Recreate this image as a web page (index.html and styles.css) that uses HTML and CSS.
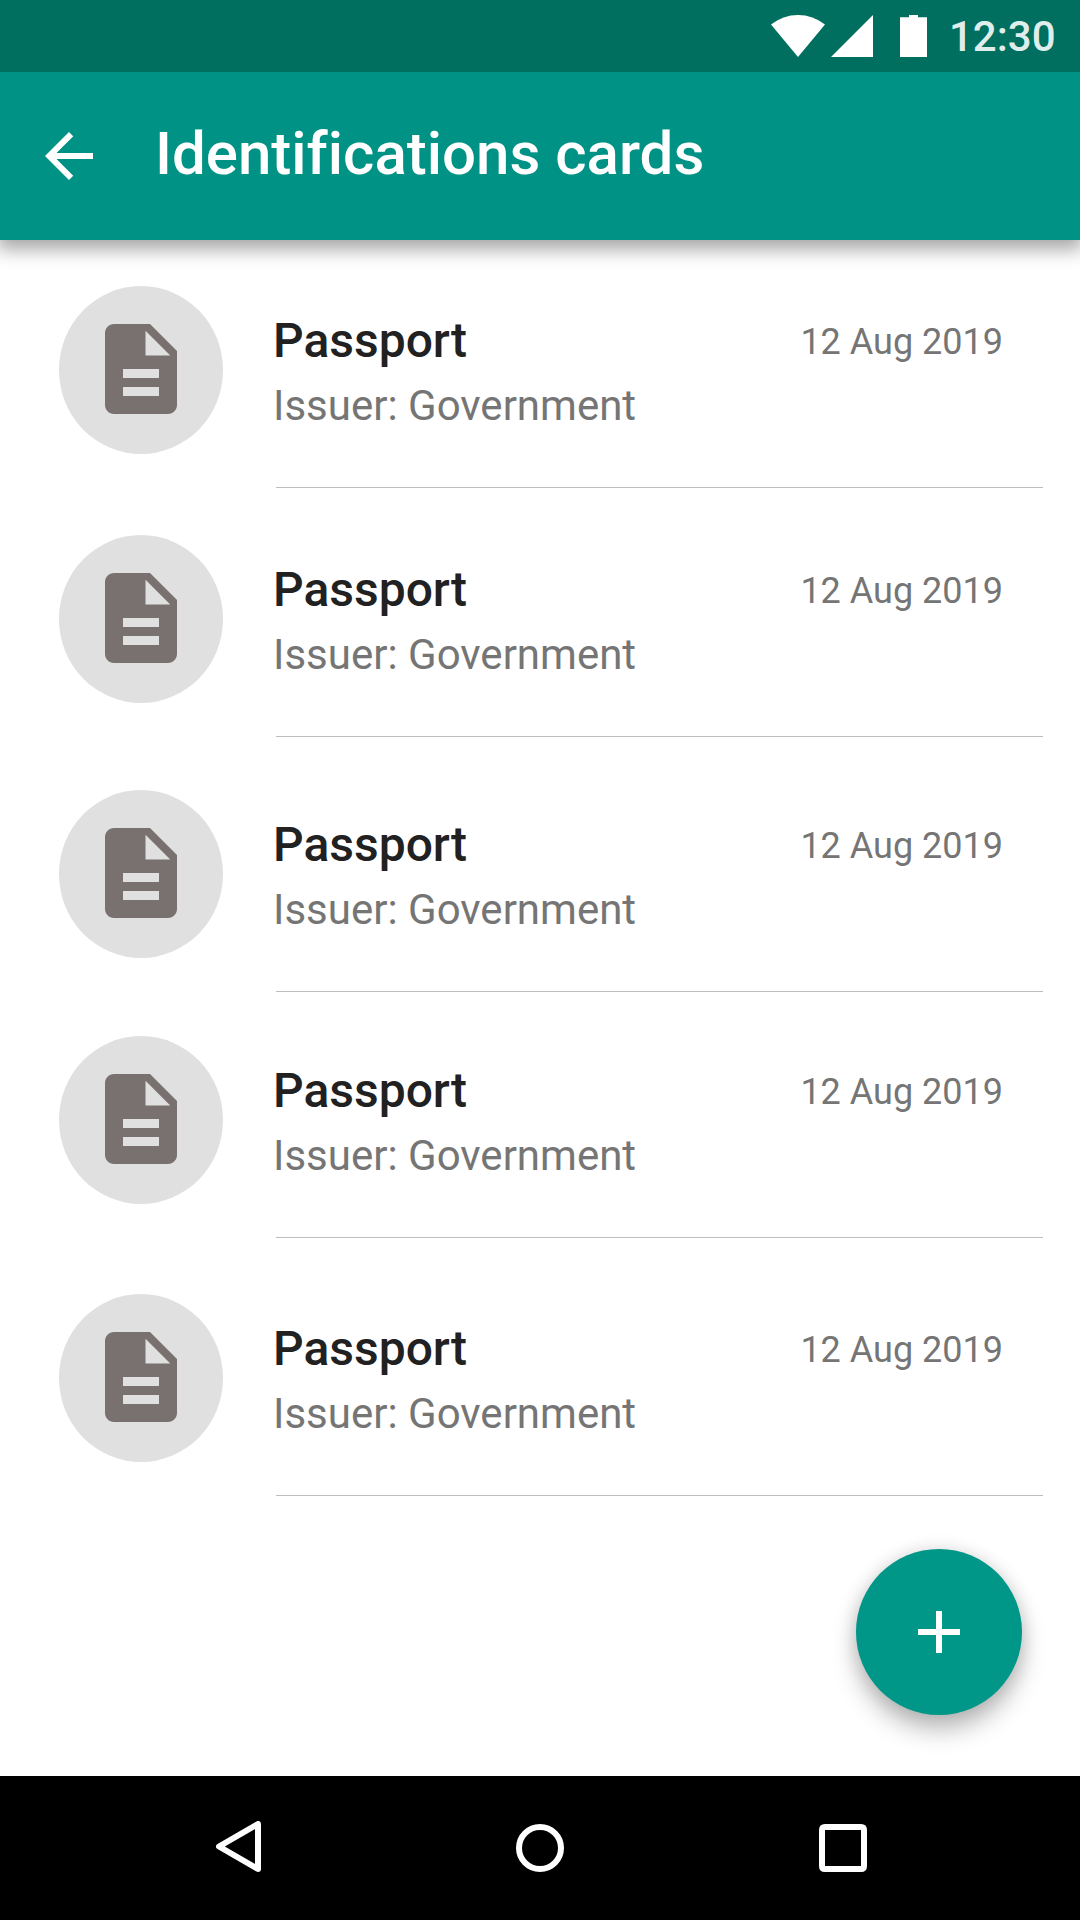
FILE: index.html
```html
<!DOCTYPE html>
<html lang="en">
<head>
<meta charset="utf-8">
<title>Identifications cards</title>
<link rel="stylesheet" href="styles.css">
</head>
<body>
<div class="screen">
  <div class="status-bar">
    <svg class="wifi" viewBox="0 0 54 42"><path d="M0 9.5Q12 0 27 0T54 9.5L27 42Z"/></svg>
    <svg class="signal" viewBox="0 0 42 42"><path d="M42 0V42H0Z"/></svg>
    <svg class="battery" viewBox="0 0 27 42"><path d="M9 0H18V2.2H27V42H0V2.2H9Z"/></svg>
    <span class="time">12:30</span>
  </div>
  <header class="app-bar">
    <svg class="back" viewBox="4 4 16 16"><path d="M20 11H7.83l5.59-5.59L12 4l-8 8 8 8 1.41-1.41L7.83 13H20v-2z"/></svg>
    <h1 class="title">Identifications cards</h1>
  </header>
  <main class="list">
    <article class="item">
      <div class="avatar"><svg class="doc" viewBox="4 2 16 20"><path d="M14 2H6c-1.100 0-2 .9-2 2v16c0 1.100.9 2 2 2h12c1.100 0 2-.9 2-2V8l-6-6zm2 16H8v-2h8v2zm0-4H8v-2h8v2zm-3-5V3.500L18.500 9H13z"/></svg></div>
      <div class="content"><div class="text"><h2 class="name">Passport</h2><p class="issuer">Issuer: Government</p></div><time class="date">12 Aug 2019</time></div>
    </article>
    <article class="item">
      <div class="avatar"><svg class="doc" viewBox="4 2 16 20"><path d="M14 2H6c-1.100 0-2 .9-2 2v16c0 1.100.9 2 2 2h12c1.100 0 2-.9 2-2V8l-6-6zm2 16H8v-2h8v2zm0-4H8v-2h8v2zm-3-5V3.500L18.500 9H13z"/></svg></div>
      <div class="content"><div class="text"><h2 class="name">Passport</h2><p class="issuer">Issuer: Government</p></div><time class="date">12 Aug 2019</time></div>
    </article>
    <article class="item item-third">
      <div class="avatar"><svg class="doc" viewBox="4 2 16 20"><path d="M14 2H6c-1.100 0-2 .9-2 2v16c0 1.100.9 2 2 2h12c1.100 0 2-.9 2-2V8l-6-6zm2 16H8v-2h8v2zm0-4H8v-2h8v2zm-3-5V3.500L18.500 9H13z"/></svg></div>
      <div class="content"><div class="text"><h2 class="name">Passport</h2><p class="issuer">Issuer: Government</p></div><time class="date">12 Aug 2019</time></div>
    </article>
    <article class="item item-fourth">
      <div class="avatar"><svg class="doc" viewBox="4 2 16 20"><path d="M14 2H6c-1.100 0-2 .9-2 2v16c0 1.100.9 2 2 2h12c1.100 0 2-.9 2-2V8l-6-6zm2 16H8v-2h8v2zm0-4H8v-2h8v2zm-3-5V3.500L18.500 9H13z"/></svg></div>
      <div class="content"><div class="text"><h2 class="name">Passport</h2><p class="issuer">Issuer: Government</p></div><time class="date">12 Aug 2019</time></div>
    </article>
    <article class="item item-fifth">
      <div class="avatar"><svg class="doc" viewBox="4 2 16 20"><path d="M14 2H6c-1.100 0-2 .9-2 2v16c0 1.100.9 2 2 2h12c1.100 0 2-.9 2-2V8l-6-6zm2 16H8v-2h8v2zm0-4H8v-2h8v2zm-3-5V3.500L18.500 9H13z"/></svg></div>
      <div class="content"><div class="text"><h2 class="name">Passport</h2><p class="issuer">Issuer: Government</p></div><time class="date">12 Aug 2019</time></div>
    </article>
  </main>
  <button class="fab" aria-label="Add"><svg class="plus" viewBox="0 0 42 42"><path d="M18 0H24V18H42V24H24V42H18V24H0V18H18Z"/></svg></button>
  <nav class="nav-bar">
    <svg class="nav-back" viewBox="0 0 45 51"><path d="M42 3V48L3 25.500Z"/></svg>
    <svg class="nav-home" viewBox="0 0 48 48"><circle cx="24" cy="24" r="21"/></svg>
    <svg class="nav-recent" viewBox="0 0 48 48"><path fill-rule="evenodd" d="M6 0H42Q48 0 48 6V42Q48 48 42 48H6Q0 48 0 42V6Q0 0 6 0ZM6 6V42H42V6Z"/></svg>
  </nav>
</div>
</body>
</html>
```
FILE: styles.css
```css
* { box-sizing: border-box; }
body, h1, h2, p { margin: 0; }
body { font-family: Roboto, sans-serif; background: #fff; }
svg { display: block; flex: none; }

.screen {
  position: relative;
  display: flex;
  flex-direction: column;
  width: 1080px;
  height: 1920px;
  overflow: hidden;
}

.status-bar {
  position: relative;
  z-index: 1;
  display: flex;
  height: 72px;
  padding: 15px 0 0 771px;
  background: #006f60;
  fill: #fff;
}
.wifi { width: 54px; height: 42px; margin-right: 6px; }
.signal { width: 42px; height: 42px; margin-right: 27px; }
.battery { width: 27px; height: 42px; margin-right: 22px; }
.time {
  margin-top: 1px;
  font-size: 42px;
  font-weight: 500;
  line-height: 42px;
  color: rgba(255, 255, 255, .9);
}

.app-bar {
  display: flex;
  align-items: flex-start;
  height: 168px;
  padding-left: 45px;
  background: #009284;
  box-shadow: 0 6px 18px 3px rgba(0, 0, 0, .36);
}
.back { width: 48px; height: 48px; margin-top: 60px; fill: #fff; }
.title {
  margin: 47px 0 0 62px;
  font-size: 60px;
  font-weight: 500;
  font-variant-ligatures: none;
  line-height: 70px;
  color: #fff;
}

.list { flex: 1; padding: 1px 37px 0 59px; }
.item { display: flex; height: 249px; padding-top: 45px; }
.item-third { height: 255px; padding-top: 51px; }
.item-fourth { height: 246px; padding-top: 42px; }
.item-fifth { height: 258px; padding-top: 54px; }
.avatar {
  display: flex;
  justify-content: center;
  width: 164px;
  height: 168px;
  padding-top: 38px;
  border-radius: 50%;
  background: #e0e0e0;
}
.doc { width: 72px; height: 90px; fill: #797170; }
.content {
  display: flex;
  flex: 1;
  justify-content: space-between;
  margin: 1px 0 2px 53px;
  padding: 24px 40px 0 0;
  border-bottom: 1px solid #bdbdbd;
}
.text { margin-left: -3px; }
.name {
  font-size: 48px;
  font-weight: 500;
  line-height: 60px;
  color: #212121;
}
.issuer {
  margin-top: 9px;
  font-size: 42px;
  line-height: 52px;
  color: #757575;
}
.date {
  margin-top: 7px;
  font-size: 36px;
  line-height: 48px;
  color: #757575;
}

.fab {
  position: absolute;
  right: 58px;
  bottom: 205px;
  display: flex;
  align-items: center;
  justify-content: center;
  width: 166px;
  height: 166px;
  padding: 0;
  border: 0;
  border-radius: 50%;
  background: #009688;
  box-shadow: 0 15px 24px rgba(0, 0, 0, .26), 0 0 18px rgba(0, 0, 0, .12);
}
.plus { width: 42px; height: 42px; fill: #fff; }

.nav-bar {
  display: flex;
  height: 144px;
  padding: 45px 0 0 216px;
  background: #000;
}
.nav-back, .nav-home {
  fill: none;
  stroke: #fff;
  stroke-width: 6px;
  stroke-linejoin: round;
}
.nav-back { width: 45px; height: 51px; }
.nav-home { width: 48px; height: 48px; margin: 3px 0 0 255px; }
.nav-recent { width: 48px; height: 48px; margin: 3px 0 0 255px; fill: #fff; }
```
